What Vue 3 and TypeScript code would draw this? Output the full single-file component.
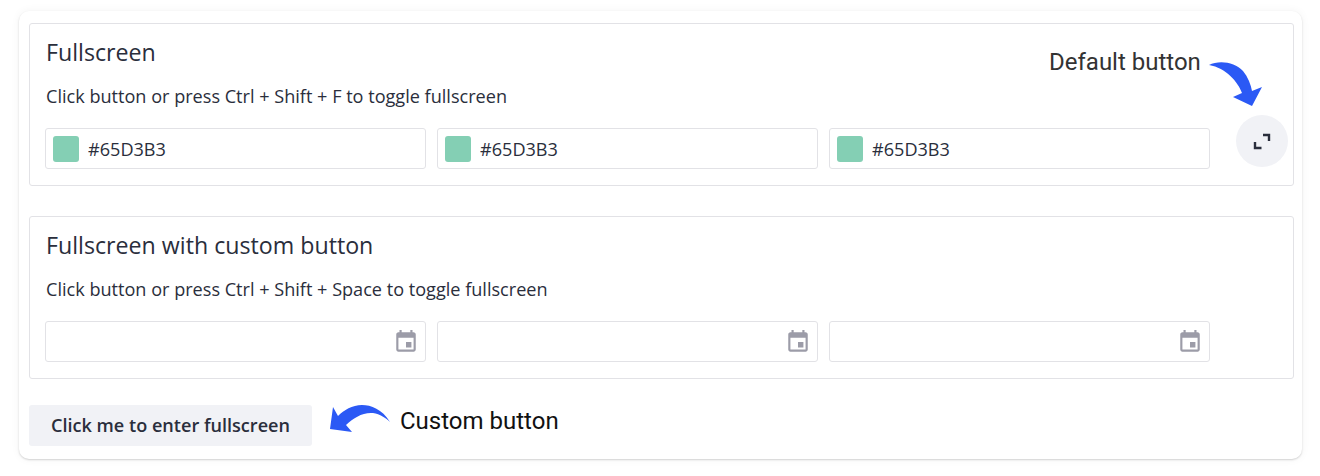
<template>
  <div class="page">
    <div class="card">
      <section class="panel">
        <h2>Fullscreen</h2>
        <p>Click button or press Ctrl + Shift + F to toggle fullscreen</p>
        <div class="fields">
          <div v-for="(color, i) in colors" :key="i" class="field">
            <span class="swatch"></span>
            <input class="field-input" :value="color" />
          </div>
        </div>
        <button class="fs-btn" aria-label="Toggle fullscreen">
          <svg width="18" height="17" viewBox="0 0 18 17">
            <path d="M2 9V15H8.500M16 8V2H10" fill="none" stroke="#2a2e3c" stroke-width="2.400" />
          </svg>
        </button>
      </section>

      <section class="panel second">
        <h2>Fullscreen with custom button</h2>
        <p>Click button or press Ctrl + Shift + Space to toggle fullscreen</p>
        <div class="fields">
          <div v-for="n in 3" :key="n" class="field">
            <input class="field-input" />
            <svg class="calendar" width="26" height="26" viewBox="0 0 24 24">
              <path
                fill="#9c9ca8"
                d="M17 12h-5v5h5v-5zM16 1v2H8V1H6v2H5c-1.110 0-1.990.9-1.990 2L3 19c0 1.100.89 2 2 2h14c1.100 0 2-.9 2-2V5c0-1.100-.9-2-2-2h-1V1h-2zm3 18H5V8h14v11z"
              />
            </svg>
          </div>
        </div>
      </section>

      <button class="custom-btn">Click me to enter fullscreen</button>
    </div>

    <span class="note note-default">Default button</span>
    <span class="note note-custom">Custom button</span>

    <svg class="arrows" width="1320" height="476" viewBox="0 0 1320 476">
      <path
        fill="#2b59f5"
        d="M1209 65C1219 60 1235 62 1243 71C1248 77 1251 85 1252 91L1262 87L1252 106L1233 97L1242 93C1238 82 1226 68 1209 65Z"
      />
      <path
        fill="#2b59f5"
        d="M390 422C382 409 371 405 362 405C352 405 344 410 338 416L333 407L330 429L352 432L346 425C353 418 363 412 373 413C380 414 386 418 390 422Z"
      />
    </svg>
  </div>
</template>

<script setup lang="ts">
const colors: string[] = ['#65D3B3', '#65D3B3', '#65D3B3'];
</script>

<style>
html,
body {
  margin: 0;
  background: #fff;
}
</style>

<style scoped>
.page {
  position: relative;
  width: 1320px;
  height: 476px;
  padding: 11px 18px 0 19px;
  box-sizing: border-box;
  overflow: hidden;
  font-family: "Open Sans", sans-serif;
  color: #2a2e3c;
}

.card {
  height: 448px;
  box-sizing: border-box;
  padding: 12px 8px 0 10px;
  background: #fff;
  border-radius: 10px;
  box-shadow: 0 1px 2px rgba(0, 0, 0, 0.16), 0 0 10px rgba(0, 0, 0, 0.05);
}

.panel {
  position: relative;
  height: 163px;
  box-sizing: border-box;
  padding: 13px 15px 0;
  border: 1px solid #e2e2e6;
  border-radius: 3px;
}

.second {
  margin-top: 30px;
}

h2 {
  margin: 0 0 0 1px;
  font-size: 23.200px;
  line-height: 30px;
  font-weight: 400;
}

p {
  margin: 17px 0 0 1px;
  font-size: 18.100px;
  line-height: 24px;
}

.fields {
  display: grid;
  grid-template-columns: repeat(3, 381px);
  gap: 11px;
  margin-top: 20px;
}

.field {
  display: flex;
  align-items: center;
  height: 41px;
  box-sizing: border-box;
  padding: 0 6px 0 7px;
  border: 1px solid #e2e2e6;
  border-radius: 3px;
}

.swatch {
  flex: none;
  width: 26px;
  height: 26px;
  margin-right: 9px;
  border-radius: 3px;
  background: #84cfb4;
}

.field-input {
  flex: 1;
  min-width: 0;
  padding: 0;
  border: none;
  outline: none;
  background: none;
  font: 400 18.100px "Open Sans", sans-serif;
  color: #2a2e3c;
}

.calendar {
  flex: none;
}

.fs-btn {
  position: absolute;
  top: 91px;
  right: 5px;
  display: flex;
  align-items: center;
  justify-content: center;
  width: 52px;
  height: 52px;
  padding: 0;
  border: none;
  border-radius: 50%;
  background: #f1f2f6;
}

.custom-btn {
  display: block;
  width: 283px;
  height: 41px;
  margin-top: 26px;
  padding: 0 0 2px;
  border: none;
  border-radius: 3px;
  background: #f1f2f6;
  font: 600 18.100px "Open Sans", sans-serif;
  color: #2a2e3c;
}

.note {
  position: absolute;
  font-family: Roboto, sans-serif;
  font-size: 24px;
  line-height: 28px;
  white-space: nowrap;
}

.note-default {
  left: 1049px;
  top: 48px;
  color: #333;
}

.note-custom {
  left: 400px;
  top: 407px;
  color: #111;
}

.arrows {
  position: absolute;
  left: 0;
  top: 0;
  pointer-events: none;
}
</style>
